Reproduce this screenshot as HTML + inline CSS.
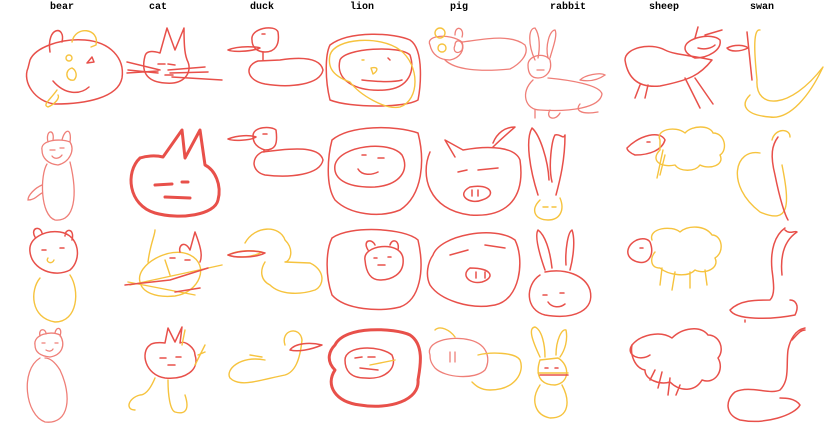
<!DOCTYPE html>
<html><head><meta charset="utf-8"><style>
html,body{margin:0;padding:0;background:#fff;width:825px;height:425px;overflow:hidden}
svg{display:block}
text{font-family:"Liberation Mono",monospace;font-weight:bold;font-size:10px;fill:#000}
.r{fill:none;stroke:#e8504a;stroke-width:1.5;stroke-linecap:round;stroke-linejoin:round}
.p{fill:none;stroke:#ef7f78;stroke-width:1.3;stroke-linecap:round}
.y{fill:none;stroke:#f6c33e;stroke-width:1.4;stroke-linecap:round;stroke-linejoin:round}
.t{stroke-width:3}
</style></head><body>
<svg width="825" height="425" viewBox="0 0 825 425">
<g text-anchor="middle">
<text x="62" y="9">bear</text><text x="158" y="9">cat</text><text x="262" y="9">duck</text><text x="362" y="9">lion</text>
<text x="459" y="9">pig</text><text x="568" y="9">rabbit</text><text x="664" y="9">sheep</text><text x="762" y="9">swan</text>
</g>
<!-- ROW 1 -->
<path class="r" d="M30,60 C35,48 60,38 85,40 C110,42 125,58 122,78 C118,98 85,104 55,104 C35,102 22,82 28,68 Z"/>
<path class="r" d="M50,52 C46,26 66,25 62,42"/>
<path class="y" d="M72,42 C75,25 100,28 96,45 L91,47"/>
<circle class="y" cx="69" cy="58" r="3"/><path class="y" d="M72,68 C64,70 66,82 74,80 C78,76 76,70 72,68"/>
<path class="r" d="M53,81 C65,95 80,95 89,87"/><path class="r" d="M87,63 L94,62 L92,57 Z"/>
<path class="y" d="M57,90 C50,100 42,105 48,107 C55,104 60,98 58,95"/>
<path class="r" d="M145,56 C140,75 150,82 165,83 C185,85 192,72 188,62 C185,56 184,48 184,28 L175,50 L167,28 L160,53 C150,50 146,52 145,56"/>
<path class="r" d="M127,62 L160,70 M128,70 L158,73 M127,73 L158,71 M168,70 L205,67 M170,73 L208,72 M172,77 L222,80 M158,64 L165,64 M168,64 L175,65 M165,75 L173,75"/>
<path class="r" d="M252,40 C250,28 275,24 278,32 C280,45 275,52 265,52 C258,52 252,48 252,40 M262,34 L265,34"/>
<path class="r" d="M228,50 C240,45 258,47 260,48 C250,52 232,52 228,50 M263,52 L263,60"/>
<path class="r" d="M258,61 C245,65 245,80 265,84 C290,88 320,85 323,70 C320,57 300,57 280,60 Z"/>
<path class="r" d="M330,45 C350,30 395,33 410,40 C425,50 420,90 418,100 C405,108 350,108 330,100 C325,80 325,55 330,45 Z"/>
<path class="r" d="M340,60 C345,48 400,45 410,55 C415,70 410,88 385,90 C355,92 335,80 340,60 Z"/>
<path class="y" d="M330,55 C335,38 380,35 400,50 C420,65 420,100 400,107 C385,110 360,95 350,82 C330,75 328,65 330,55 Z"/>
<path class="y" d="M362,60 L364,60 M371,68 C380,66 377,72 373,74 Z"/><path class="r" d="M362,80 C380,82 395,82 402,80 M388,58 L390,60"/>
<path class="p" d="M430,45 C425,35 450,33 462,42 C465,50 460,58 450,60 C440,60 432,55 430,45"/>
<circle class="y" cx="440" cy="33" r="5"/><circle class="y" cx="442" cy="48" r="4"/><path class="p" d="M455,45 C455,38 465,40 462,50 C458,55 452,52 455,45 M455,35 C455,24 465,28 462,37"/>
<path class="p" d="M462,42 C480,40 510,33 525,45 C530,55 518,65 510,69 C480,72 455,70 445,60"/>
<path class="p" d="M535,60 C528,45 528,28 535,28 C540,35 540,48 538,58 M548,58 C545,45 550,30 555,30 C558,35 552,50 550,58"/>
<path class="p" d="M528,65 C528,55 545,52 550,60 C553,72 545,78 538,78 C530,78 528,72 528,65 M537,70 L544,70"/>
<path class="p" d="M533,80 C520,92 525,110 540,110 C570,112 600,108 602,94 C600,85 570,80 548,78 M535,110 L535,118 M550,110 C545,118 555,122 560,113 M580,80 C585,75 600,72 605,75 C598,80 590,82 580,80 M580,104 C575,110 580,115 598,112"/>
<path class="r" d="M625,60 C625,48 650,42 665,50 C675,55 690,55 712,60 C700,75 690,80 660,86 C640,88 628,80 625,60 M640,85 L635,98 M648,85 L645,98 M685,78 L700,108 M695,78 L713,104"/>
<path class="r" d="M685,48 C685,38 712,32 720,40 C722,50 708,58 695,58 C688,55 685,52 685,48 M698,48 C705,50 712,48 715,45 M695,38 L698,27 M705,35 L722,30"/>
<path class="y" d="M760,30 C752,28 755,60 757,80 C755,110 790,110 823,67 C810,95 790,120 770,117 C745,115 740,105 750,95"/>
<path class="r" d="M747,32 L752,80 M727,48 C735,44 745,45 748,48 C740,52 730,52 727,48"/>
<!-- ROW 2 -->
<path class="p" d="M42,150 C40,140 60,138 70,142 C75,150 70,162 58,165 C48,164 42,158 42,150 M48,142 C45,130 55,128 53,140 M62,140 C65,128 72,128 70,142 M50,150 L55,150 M60,148 L64,148 M52,156 C55,160 60,158 62,155"/>
<path class="p" d="M47,164 C40,175 40,215 55,220 C75,222 78,195 70,162 M42,185 C35,188 28,195 28,200 C35,200 38,195 42,193"/>
<path class="r t" d="M140,158 C125,172 128,205 155,213 C180,220 215,215 218,200 C222,185 215,170 205,165 L200,130 L185,158 L182,130 L163,157 C155,155 146,156 140,158"/>
<path class="r t" d="M155,185 L172,184 M182,182 L188,182 M165,197 L190,198"/>
<path class="r" d="M253,136 C253,126 272,126 276,130 C278,145 275,150 265,150 C258,148 253,144 253,136 M263,134 L267,134"/>
<path class="r" d="M228,139 C238,135 250,135 256,137 C250,141 232,141 228,139 M264,150 L264,152"/>
<path class="r" d="M262,152 C250,158 252,172 265,175 C290,178 320,175 323,160 C320,148 300,148 280,150 Z"/>
<path class="r" d="M332,140 C350,125 395,125 418,133 C425,160 423,195 400,210 C380,218 350,215 335,200 C325,185 328,155 332,140 Z"/>
<path class="r" d="M335,165 C340,145 390,140 402,155 C410,170 400,185 375,187 C345,188 333,178 335,165 Z M362,155 L366,155 M378,158 L384,158 M358,169 C362,176 372,175 378,172"/>
<path class="r" d="M430,152 C420,175 428,210 470,215 C510,218 525,195 520,160 C515,147 490,145 463,150 L445,140 L455,157 M493,143 C497,133 505,127 515,127 C508,133 500,140 493,147"/>
<path class="r" d="M458,172 L467,170 M478,170 L498,168 M470,187 C455,195 470,205 482,200 C498,195 490,183 470,187 M478,190 L478,196 M472,190 L472,196"/>
<path class="r" d="M538,195 C530,170 525,140 532,128 C540,135 548,160 549,180 M552,182 C548,165 552,140 555,135 C560,133 563,140 565,135 C565,160 560,180 556,195"/>
<path class="y" d="M540,200 C530,210 535,220 548,220 C560,220 565,210 560,198 M543,207 L548,207 M552,207 L556,207"/>
<path class="r" d="M627,148 C640,135 660,130 665,140 C662,150 650,155 635,155 C630,153 627,150 627,148 M647,142 L650,142"/>
<path class="y" d="M660,140 C655,130 675,125 685,133 C692,125 710,125 713,133 C725,133 728,150 720,155 C725,165 710,170 700,165 C695,172 680,172 675,165 C660,168 650,160 660,150 Z M663,150 L657,178 M665,155 L660,175"/>
<path class="y" d="M772,140 C775,128 790,128 790,137 M760,153 C735,148 725,185 760,212 C790,225 790,205 782,165"/>
<path class="r" d="M778,137 C772,145 770,155 775,175 C780,200 785,215 788,220"/>
<!-- ROW 3 -->
<path class="r" d="M30,252 C28,238 45,230 60,232 C80,235 82,260 70,270 C55,278 32,270 30,252 M35,237 C30,228 40,225 42,233 M65,236 C65,228 75,228 72,240 M42,250 L46,250 M60,248 L64,248"/>
<path class="y" d="M48,258 C45,262 52,265 54,260 M40,278 C30,290 30,318 55,322 C78,322 80,290 70,275"/>
<path class="y" d="M140,282 C135,265 170,245 190,255 C210,265 200,292 175,296 C155,298 142,292 140,282 M130,285 L222,265 M128,282 L195,295 M148,262 C150,245 155,235 155,230 M165,260 L170,275"/>
<path class="r" d="M180,252 C178,245 185,240 190,250 L195,232 C200,245 203,255 200,262 M170,258 L175,258 M185,260 L190,260 M125,285 L170,280 M170,280 L208,268 M175,292 L200,288"/>
<path class="y" d="M245,243 C255,225 280,225 285,240 C295,250 290,262 285,262 L310,263 C325,270 325,285 315,290 C300,295 280,295 270,285 C260,280 260,270 265,262 M228,255 C238,250 252,250 262,252 C252,258 235,258 228,255"/>
<path class="r" d="M228,255 C240,250 255,250 265,253 C255,258 235,258 228,255"/>
<path class="r" d="M332,238 C350,225 405,228 418,240 C425,270 420,300 400,307 C380,312 345,310 332,295 C325,275 326,250 332,238 Z"/>
<path class="r" d="M365,260 C362,245 400,240 403,258 C405,275 390,280 380,280 C370,280 366,272 365,260 M368,250 C362,240 372,238 375,245 M390,245 C392,238 400,240 398,250 M378,265 L385,265 M374,258 L377,258 M388,257 L391,257"/>
<path class="r" d="M433,255 C440,235 495,225 515,240 C525,260 520,300 495,305 C470,310 440,300 430,285 C425,275 428,262 433,255 Z M450,255 L468,250 M485,245 L505,248"/>
<path class="r" d="M470,268 C460,275 470,285 482,282 C495,278 493,268 470,268 M476,272 L476,278 M485,272 L485,278"/>
<path class="r" d="M545,270 C538,250 535,235 538,230 C545,235 550,250 552,268 M566,265 C565,250 568,232 572,230 C575,238 574,255 570,270"/>
<path class="r" d="M540,275 C525,285 525,310 545,315 C575,320 595,310 590,290 C585,275 565,268 545,272 M543,295 L547,295 M560,293 L564,293 M548,302 C552,308 560,308 565,304"/>
<path class="y" d="M652,240 C648,228 672,225 680,232 C688,225 705,225 712,235 C722,235 725,252 715,258 C720,268 705,275 695,270 C688,278 668,275 660,268 C650,268 650,258 655,252 M662,268 L660,285 M675,272 L672,290 M690,272 L690,288 M705,270 L707,285"/>
<path class="r" d="M628,250 C630,240 645,235 650,242 C655,255 648,265 638,262 C630,260 627,255 628,250 M640,248 L643,248"/>
<path class="r" d="M785,228 C775,235 770,250 772,270 C774,285 775,295 770,300 C755,300 740,300 730,310 C735,320 770,320 795,315 C800,305 795,300 790,300 M785,230 C790,235 795,230 797,232 C785,240 780,255 782,275 M745,320 L745,322"/>
<!-- ROW 4 -->
<path class="p" d="M35,345 C33,335 50,330 60,335 C66,345 62,355 50,357 C40,356 35,352 35,345 M40,336 C38,328 46,328 46,334 M55,333 C56,326 63,327 60,336 M42,343 L45,343 M55,343 L58,343 M46,350 C49,352 52,351 53,349"/>
<path class="p" d="M40,358 C20,370 25,415 45,422 C70,425 72,395 60,370 C55,362 50,358 45,358"/>
<path class="r" d="M150,345 C140,352 145,375 165,378 C185,380 200,370 195,355 C195,348 185,340 180,343 L182,327 L175,342 L168,328 L165,343 C158,342 152,343 150,345 M160,358 L166,358 M176,357 L181,357 M168,365 L175,365"/>
<path class="y" d="M155,378 C150,390 145,395 140,395 C128,398 125,410 135,410 M168,380 C168,395 170,410 175,412 C185,415 190,410 185,395 M195,365 L205,345 M198,355 L205,352 M182,345 L185,330"/>
<path class="y" d="M285,345 C280,330 300,325 302,340 C300,360 295,372 285,375 C260,380 240,388 230,378 C225,370 240,355 265,360 M250,355 L262,357"/>
<path class="r" d="M290,350 C295,343 310,342 322,345 C310,350 298,352 290,350"/>
<path class="r t" d="M335,345 C345,325 395,328 410,335 C425,345 420,368 418,380 C420,400 390,410 360,405 C335,402 325,385 335,370 C325,360 330,350 335,345 Z"/>
<path class="r" d="M345,360 C345,345 380,345 392,355 C398,368 385,380 365,378 C350,378 345,370 345,360 M355,358 L362,357 M368,357 L375,357 M360,368 L378,370"/>
<path class="y" d="M370,365 L395,360"/>
<path class="p" d="M430,355 C425,342 450,335 470,340 C490,345 490,362 485,370 C475,380 445,378 435,368 C430,362 430,358 430,355 M450,352 L450,362 M455,352 L455,362"/>
<path class="y" d="M435,330 C440,325 450,330 455,337 M478,355 C490,352 515,352 520,360 C525,372 515,390 490,390 C480,390 475,385 472,382"/>
<path class="y" d="M540,357 C532,340 528,328 535,327 C542,330 545,345 545,357 M556,355 C556,340 562,328 566,330 C568,340 565,350 560,357 M540,360 C535,375 540,385 555,385 C570,383 570,365 558,358 Z M538,373 L568,373 M540,385 C530,400 535,415 550,418 C570,418 570,400 562,385"/>
<path class="r" d="M540,375 L568,375 M545,368 L548,368 M555,368 L558,368"/>
<path class="r" d="M632,345 C640,335 660,330 672,338 C682,328 700,325 708,335 C720,335 725,350 718,358 C725,370 715,385 702,380 C695,392 680,392 670,382 C660,385 645,380 645,370 C635,368 630,355 632,345 Z M655,370 L650,380 M662,372 L658,388 M670,378 L668,395 M680,385 L676,395"/>
<path class="r" d="M632,345 C625,355 640,362 650,355"/>
<path class="r" d="M805,328 C795,330 790,340 788,350 C786,365 790,380 780,390 C770,395 750,385 735,392 C725,400 725,415 740,420 C765,425 795,415 800,405 C795,398 785,398 780,398 M792,340 C797,335 800,330 805,330"/>
</svg>
</body></html>
